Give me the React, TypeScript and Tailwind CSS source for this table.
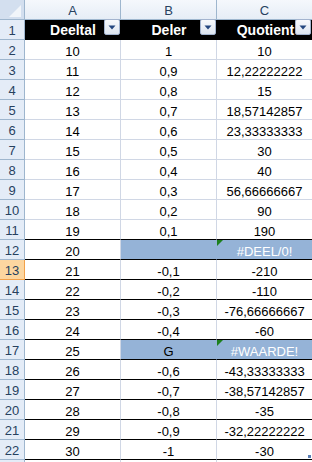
import React from 'react';

type Row = {
    a: string;
    b: string;
    c: string;
    fill?: boolean;
};

const data: Row[] = [
    { a: '10', b: '1', c: '10' },
    { a: '11', b: '0,9', c: '12,22222222' },
    { a: '12', b: '0,8', c: '15' },
    { a: '13', b: '0,7', c: '18,57142857' },
    { a: '14', b: '0,6', c: '23,33333333' },
    { a: '15', b: '0,5', c: '30' },
    { a: '16', b: '0,4', c: '40' },
    { a: '17', b: '0,3', c: '56,66666667' },
    { a: '18', b: '0,2', c: '90' },
    { a: '19', b: '0,1', c: '190' },
    { a: '20', b: '', c: '#DEEL/0!', fill: true },
    { a: '21', b: '-0,1', c: '-210' },
    { a: '22', b: '-0,2', c: '-110' },
    { a: '23', b: '-0,3', c: '-76,66666667' },
    { a: '24', b: '-0,4', c: '-60' },
    { a: '25', b: 'G', c: '#WAARDE!', fill: true },
    { a: '26', b: '-0,6', c: '-43,33333333' },
    { a: '27', b: '-0,7', c: '-38,57142857' },
    { a: '28', b: '-0,8', c: '-35' },
    { a: '29', b: '-0,9', c: '-32,22222222' },
    { a: '30', b: '-1', c: '-30' },
];

const FilterButton = () => (
    <div className="absolute right-[1px] top-[-1px] w-4 h-4 rounded-[2px] border border-[#a3b4cf] bg-gradient-to-b from-[#f7f9fc] to-[#dde5f0] flex items-center justify-center">
        <svg width="8" height="5" viewBox="0 0 8 5">
            <polygon points="0.5,0.5 7.5,0.5 4,4.5" fill="#23467f" />
        </svg>
    </div>
);

const ColHeader = ({ label, last }: { label: string; last?: boolean }) => (
    <div
        className={`h-5 border-b border-[#9eb6ce] bg-gradient-to-b from-[#f5f8fc] to-[#e6edf6] text-center pt-[4px] leading-[14px] text-[#27415f] ${
            last ? 'flex-1' : 'w-[96px] border-r'
        }`}
    >
        {label}
    </div>
);

const RowHeader = ({ n, active }: { n: number; active?: boolean }) => (
    <div
        className={`w-[25px] h-5 shrink-0 border-r border-b text-center pt-[4px] leading-[14px] text-[#27415f] ${
            active
                ? 'bg-[#fcd6a0] border-[#f2a14a]'
                : 'bg-[#e4ecf7] border-[#9eb6ce]'
        }`}
    >
        {n}
    </div>
);

export default function App() {
    return (
        <div className="relative w-[312px] h-[462px] overflow-hidden bg-white text-[13px] font-['Liberation_Sans',Arial,sans-serif] text-black">
            {/* column letters */}
            <div className="flex">
                <div className="relative w-[25px] h-5 shrink-0 border-r border-b border-[#9eb6ce] bg-[#d3dfef]">
                    <svg className="absolute left-[9px] top-[5px]" width="12" height="12" viewBox="0 0 12 12">
                        <polygon points="12,0 12,12 0,12" fill="#f1f5fa" />
                    </svg>
                </div>
                <ColHeader label="A" />
                <ColHeader label="B" />
                <ColHeader label="C" last />
            </div>

            {/* table header */}
            <div className="flex">
                <RowHeader n={1} />
                <div className="flex flex-1 h-5 bg-black text-white font-bold text-[14px]">
                    <div className="relative w-[96px] text-center pt-[3px] leading-[15px]">
                        Deeltal
                        <FilterButton />
                    </div>
                    <div className="relative w-[96px] text-center pt-[3px] leading-[15px]">
                        Deler
                        <FilterButton />
                    </div>
                    <div className="relative flex-1 text-center pt-[3px] leading-[15px] pl-[2px]">
                        Quotient
                        <FilterButton />
                    </div>
                </div>
            </div>

            {data.map((r, i) => {
                const rowNo = i + 2;
                const dark = rowNo >= 11;
                const lineB = dark ? 'border-b-black' : 'border-b-[#d0d7e5]';
                return (
                    <div key={rowNo} className="flex">
                        <RowHeader n={rowNo} active={rowNo === 13} />
                        <div className={`w-[96px] h-5 border-r border-b border-r-[#d0d7e5] ${lineB} text-center pt-[5px] leading-[14px]`}>
                            {r.a}
                        </div>
                        <div
                            className={`w-[96px] h-5 border-r border-b ${lineB} text-center pt-[5px] leading-[14px] ${
                                r.fill ? 'bg-[#95b3d7] border-r-[#95b3d7]' : 'border-r-[#d0d7e5]'
                            }`}
                        >
                            {r.b}
                        </div>
                        <div
                            className={`relative flex-1 h-5 border-b ${lineB} text-center pt-[5px] leading-[14px] ${
                                r.fill ? 'bg-[#95b3d7] text-white' : ''
                            }`}
                        >
                            {r.fill && (
                                <div className="absolute left-0 top-0 w-0 h-0 border-t-[6px] border-t-[#1d801d] border-r-[6px] border-r-transparent" />
                            )}
                            {r.c}
                        </div>
                    </div>
                );
            })}

            {/* next row peeking in */}
            <div className="flex">
                <div className="w-[25px] h-[2px] border-r border-[#9eb6ce] bg-[#e4ecf7]" />
                <div className="w-[96px] h-[2px] border-r border-[#d0d7e5]" />
                <div className="w-[96px] h-[2px] border-r border-[#d0d7e5]" />
            </div>

            {/* table resize handle */}
            <div className="absolute right-[1px] top-[455px] w-[3px] h-[3px] bg-[#5b7fb5]" />
        </div>
    );
}
